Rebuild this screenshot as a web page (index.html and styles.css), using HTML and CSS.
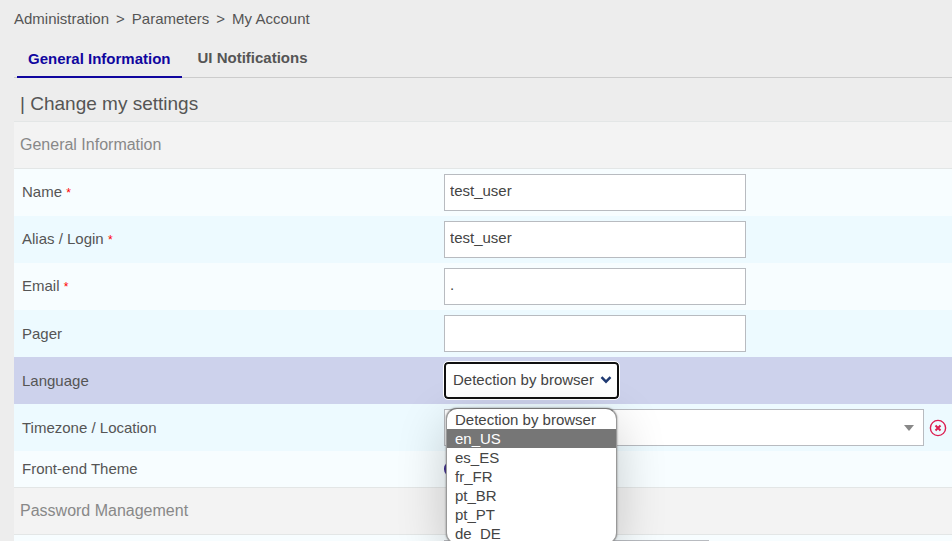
FILE: index.html
```html
<!DOCTYPE html>
<html lang="en">
<head>
<meta charset="utf-8">
<title>My Account</title>
<link rel="stylesheet" href="styles.css">
</head>
<body>
<div class="page">
  <nav class="breadcrumb" aria-label="Breadcrumb">
    <a href="#">Administration</a>
    <span>&gt;</span>
    <a href="#">Parameters</a>
    <span>&gt;</span>
    <a href="#">My Account</a>
  </nav>
  <nav class="tabs" aria-label="Settings sections">
    <a class="tab tab-active" href="#">General Information</a>
    <a class="tab" href="#">UI Notifications</a>
  </nav>
  <form>
    <h1 class="title">| Change my settings</h1>
    <h2 class="section">General Information</h2>
    <div class="row">
      <label for="name">Name <span class="required">*</span></label>
      <input class="field" id="name" type="text" value="test_user">
    </div>
    <div class="row row-alt">
      <label for="alias">Alias / Login <span class="required">*</span></label>
      <input class="field" id="alias" type="text" value="test_user">
    </div>
    <div class="row">
      <label for="email">Email <span class="required">*</span></label>
      <input class="field" id="email" type="text" value=".">
    </div>
    <div class="row row-alt">
      <label for="pager">Pager</label>
      <input class="field" id="pager" type="text">
    </div>
    <div class="row row-current">
      <label for="language">Language</label>
      <div class="language">
        <select class="language-select" id="language">
          <option>Detection by browser</option>
          <option>en_US</option>
          <option>es_ES</option>
          <option>fr_FR</option>
          <option>pt_BR</option>
          <option>pt_PT</option>
          <option>de_DE</option>
        </select>
        <svg class="chevron" viewBox="0 0 12 8" aria-hidden="true"><path d="M1.500 1.200 6 5.700l4.500-4.500"/></svg>
        <ul class="menu" role="listbox" aria-label="Language">
          <li role="option">Detection by browser</li>
          <li role="option" class="highlighted" aria-selected="true">en_US</li>
          <li role="option">es_ES</li>
          <li role="option">fr_FR</li>
          <li role="option">pt_BR</li>
          <li role="option">pt_PT</li>
          <li role="option">de_DE</li>
        </ul>
      </div>
    </div>
    <div class="row row-alt">
      <label for="timezone">Timezone / Location</label>
      <div class="timezone">
        <select class="timezone-select" id="timezone"><option></option></select>
        <svg class="caret" viewBox="0 0 10 6" aria-hidden="true"><path d="M0 0h10L5 6z"/></svg>
        <button class="clear" type="button" aria-label="Clear timezone">
          <svg viewBox="0 0 18 18" aria-hidden="true"><circle cx="9" cy="9" r="7.600"/><path class="cross" d="m6.500 6.500 5 5m0-5-5 5"/></svg>
        </button>
      </div>
    </div>
    <div class="row row-short">
      <label for="theme">Front-end Theme</label>
      <input class="switch" id="theme" type="checkbox">
    </div>
    <h2 class="section">Password Management</h2>
    <div class="row">
      <input class="field field-narrow" type="password" aria-label="Password">
    </div>
  </form>
</div>
</body>
</html>
```
FILE: styles.css
```css
* { box-sizing: border-box; }

body {
  margin: 0;
  background: #ededed;
  color: #555;
  font: 15px/20px "Liberation Sans", Arial, sans-serif;
}

.page {
  height: 100vh;
  overflow: hidden;
  padding: 9px 0 0 14px;
}

a { color: inherit; text-decoration: none; }

.breadcrumb { display: flex; gap: 7px; }

.tabs {
  display: flex;
  margin-top: 10px;
  padding-left: 3px;
  height: 39px;
  border-bottom: 1px solid #ccc;
}

.tab {
  height: 39px;
  padding: 9px 11px;
  border-bottom: 2px solid transparent;
  font-weight: bold;
}

.tab:not(.tab-active) { padding-left: 16px; }

.tab-active { padding-top: 10px; color: #10069f; border-color: #10069f; }

.title {
  margin: 0;
  padding: 14px 6px 5px;
  font-size: 19px;
  line-height: 24px;
  font-weight: normal;
}

.section {
  height: 48px;
  margin: 0;
  padding: 13px 6px;
  border: solid #e3e6e6;
  border-width: 1px 0;
  background: #f3f3f3;
  color: #888;
  font-size: 16px;
  line-height: 20px;
  font-weight: normal;
}

.row {
  display: grid;
  grid-template-columns: 422px 1fr;
  align-items: center;
  min-height: 47px;
  padding-left: 8px;
  background: #f7fdff;
}

.row-alt { background: #edfaff; }
.row-current { background: #cdd2ec; }
.row-short { min-height: 36px; }

.required { color: #f00; font-size: 12px; }

.field,
.timezone-select {
  grid-column: 2;
  height: 37px;
  border: 1px solid #b8bbc0;
  border-radius: 0;
  background: #fff;
  color: #444;
  font: inherit;
}

.field { width: 302px; padding: 0 5px 4px; }
.field-narrow { width: 265px; }

.language { position: relative; width: 175px; }

.language-select {
  appearance: none;
  display: block;
  width: 100%;
  height: 37px;
  padding: 0 20px 2px 7px;
  border: 2px solid #101010;
  border-radius: 4px;
  outline: 1px solid #fff;
  background: #fff;
  color: #444;
  font: inherit;
}

.chevron {
  position: absolute;
  top: 14px;
  right: 7px;
  width: 12px;
  height: 8px;
  fill: none;
  stroke: #1f3a72;
  stroke-width: 2.4;
}

.menu {
  position: absolute;
  z-index: 1;
  top: 46px;
  left: 2px;
  width: 171px;
  margin: 0;
  padding: 1px 0 0;
  list-style: none;
  overflow: hidden;
  border: 1px solid #999;
  border-top-color: #777;
  border-radius: 11px;
  background: #fff;
  box-shadow: 0 0 2px #777, 0 14px 50px rgba(0, 0, 0, 0.2);
  color: #444;
  line-height: 19px;
}

.menu li { padding-left: 8px; }
.menu .highlighted { background: #767676; color: #fff; }

.timezone {
  position: relative;
  display: flex;
  align-items: center;
  padding-right: 5px;
}

.timezone-select { appearance: none; flex: 1; min-width: 0; }

.caret {
  position: absolute;
  right: 38px;
  width: 10px;
  height: 6px;
  fill: #888;
}

.clear {
  width: 18px;
  height: 18px;
  margin-left: 5px;
  padding: 0;
  border: 0;
  background: none;
}

.clear svg { display: block; fill: none; stroke: #dc1c50; stroke-width: 1.4; }
.clear .cross { stroke-width: 2; }

.switch {
  appearance: none;
  width: 32px;
  height: 18px;
  margin: 0;
  border-radius: 9px;
  background: #2e1a87;
}
```
